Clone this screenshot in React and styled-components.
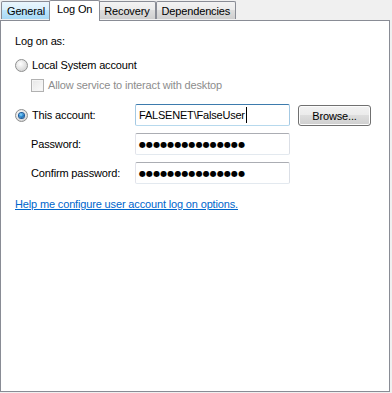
// Service properties dialog - Log On tab

import React from 'react';
import styled, { createGlobalStyle, css } from 'styled-components';

const GlobalStyle = createGlobalStyle`
    html, body {
        margin: 0;
        padding: 0;
        background: #f0f0f0;
    }
    body {
        font-family: "Liberation Sans", Arial, sans-serif;
        font-size: 11px;
        letter-spacing: -0.15px;
        color: #000;
    }
`

const tabs = ['General', 'Log On', 'Recovery', 'Dependencies'];

const App = () => {
    return (
        <>
            <GlobalStyle />
            <Dialog>
                <TabStrip>
                    {tabs.map(name => (
                        <Tab key={name} $active={name === 'Log On'}>{name}</Tab>
                    ))}
                </TabStrip>
                <Panel>
                    <Text>Log on as:</Text>
                    <OptionRow>
                        <Radio />
                        <Text>Local System account</Text>
                    </OptionRow>
                    <CheckRow>
                        <Checkbox />
                        <Text $disabled>Allow service to interact with desktop</Text>
                    </CheckRow>
                    <AccountGrid>
                        <OptionRow>
                            <Radio $checked />
                            <Text>This account:</Text>
                        </OptionRow>
                        <Field $focused>
                            FALSENET\FalseUser<Caret />
                        </Field>
                        <Button>Browse...</Button>

                        <FieldLabel>Password:</FieldLabel>
                        <Field><Dots>●●●●●●●●●●●●●●●</Dots></Field>
                        <span />

                        <FieldLabel>Confirm password:</FieldLabel>
                        <Field><Dots>●●●●●●●●●●●●●●●</Dots></Field>
                        <span />
                    </AccountGrid>
                    <HelpLink href="#">Help me configure user account log on options.</HelpLink>
                </Panel>
            </Dialog>
        </>
    )
}

const Dialog = styled.div`
    width: 390px;
    height: 392px;
    display: flex;
    flex-direction: column;
`

const TabStrip = styled.div`
    display: flex;
    align-items: flex-end;
    height: 20px;
    padding-left: 1px;
    position: relative;
    z-index: 1;
`

const Tab = styled.div`
    height: 17px;
    padding: 0 5px;
    display: flex;
    align-items: center;
    border: 1px solid #898c95;
    border-bottom: none;
    border-radius: 2px 2px 0 0;
    background: linear-gradient(#f3f3f3 0%, #ebebeb 45%, #dddddd 50%, #cfcfcf 100%);
    margin-bottom: 1px;
    &:first-child {
        background: linear-gradient(#eaf6fd 0%, #d9f0fc 45%, #bee6fd 50%, #a7d9f5 100%);
    }
    ${p => p.$active && css`
        height: 21px;
        margin: 0 -2px -1px;
        padding: 2px 7px 0;
        align-items: flex-start;
        box-sizing: border-box;
        background: #fff !important;
        position: relative;
        z-index: 2;
    `}
`

const Panel = styled.div`
    flex: 1;
    background: #fff;
    border: 1px solid #898c95;
    padding: 14px 14px 0;
    display: flex;
    flex-direction: column;
    align-items: flex-start;
`

const Text = styled.span`
    line-height: 13px;
    white-space: nowrap;
    color: ${p => p.$disabled ? '#8d8d8d' : '#000'};
`

const OptionRow = styled.div`
    display: flex;
    align-items: center;
    gap: 4px;
    margin-top: 11px;
`

const CheckRow = styled.div`
    display: flex;
    align-items: center;
    gap: 4px;
    margin: 7px 0 0 16px;
`

const Radio = styled.span`
    width: 13px;
    height: 13px;
    box-sizing: border-box;
    border-radius: 50%;
    border: 1px solid #8e8f8f;
    background: radial-gradient(circle at 40% 35%, #ffffff 0%, #e6e6e6 45%, #c9c9c9 100%);
    display: flex;
    align-items: center;
    justify-content: center;
    flex-shrink: 0;
    &::after {
        content: '';
        width: 5px;
        height: 5px;
        border-radius: 50%;
        display: ${p => p.$checked ? 'block' : 'none'};
        background: radial-gradient(circle at 40% 35%, #8fdcff 0%, #2a8ad4 45%, #0b3f7a 100%);
        box-shadow: 0 0 0 1px #1c5a9a;
    }
`

const Checkbox = styled.span`
    width: 13px;
    height: 13px;
    box-sizing: border-box;
    border: 1px solid #b1b1b1;
    background: linear-gradient(135deg, #e6e6e6, #fbfbfb);
    box-shadow: inset 0 0 0 1px #f4f4f4;
    flex-shrink: 0;
`

const AccountGrid = styled.div`
    display: grid;
    grid-template-columns: 112px 155px 73px;
    grid-auto-rows: 22px;
    column-gap: 8px;
    row-gap: 7px;
    align-items: center;
    margin-top: 12px;
    ${OptionRow} {
        margin-top: 0;
    }
`

const FieldLabel = styled.span`
    line-height: 13px;
    padding-left: 16px;
    white-space: nowrap;
`

const Field = styled.div`
    height: 22px;
    box-sizing: border-box;
    border: 1px solid;
    border-color: ${p => p.$focused
        ? '#3d7bad #a4c9e3 #b7d9ed #a4c9e3'
        : '#abadb3 #dbdfe6 #e3e9ef #e2e3ea'};
    border-radius: 2px;
    padding: 0 3px;
    display: flex;
    align-items: center;
    white-space: nowrap;
    letter-spacing: -0.2px;
`

const Caret = styled.span`
    display: inline-block;
    width: 1px;
    height: 16px;
    background: #000;
    margin-left: 1px;
`

const Dots = styled.span`
    font-family: "DejaVu Sans", sans-serif;
    font-size: 8px;
    letter-spacing: 0.1px;
    line-height: 13px;
`

const Button = styled.button`
    align-self: start;
    height: 21px;
    margin-top: 1px;
    padding: 0;
    font: inherit;
    letter-spacing: inherit;
    color: #000;
    border: 1px solid #707070;
    border-radius: 3px;
    background: linear-gradient(#f2f2f2 0%, #ebebeb 49%, #dddddd 50%, #cfcfcf 100%);
    box-shadow: inset 0 0 0 1px #fcfcfc;
`

const HelpLink = styled.a`
    margin-top: 14px;
    line-height: 13px;
    color: #0066cc;
    text-decoration: underline;
    white-space: nowrap;
`

export default App;
